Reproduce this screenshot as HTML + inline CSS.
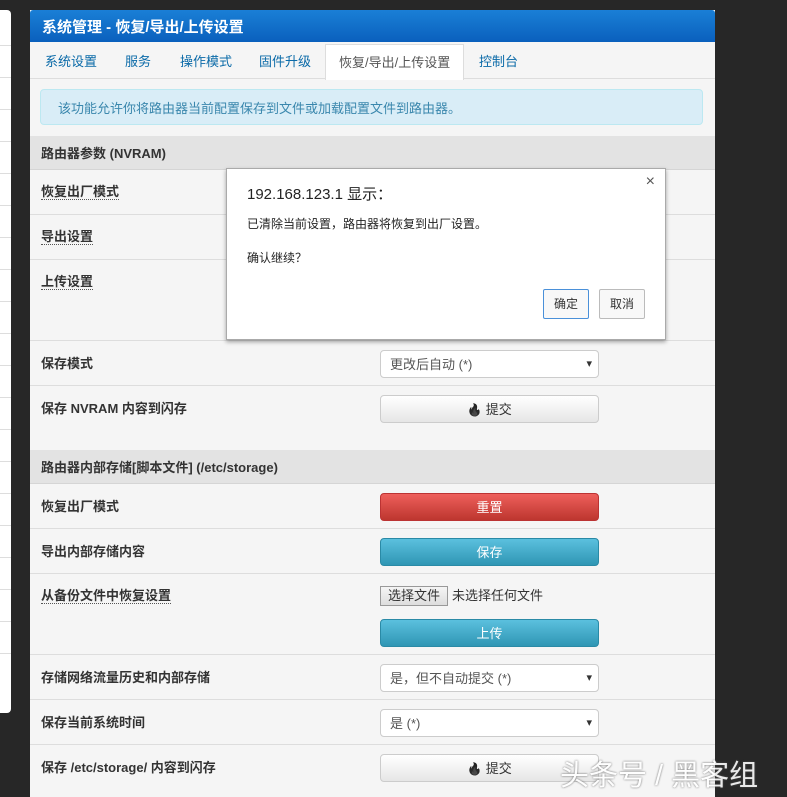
<!DOCTYPE html>
<html><head><meta charset="utf-8"><style>
*{box-sizing:border-box;margin:0;padding:0}
body{width:787px;height:797px;background:#272727;font-family:"Liberation Sans","Noto Sans CJK SC",sans-serif;font-size:13px;color:#333;position:relative;overflow:hidden}
.abs{position:absolute}
.side{left:0;top:10px;width:11px;height:703px;background:#fff;border-radius:0 4px 4px 0}
.side i{position:absolute;left:0;width:11px;border-top:1px solid #ddd}
.panel{left:30px;top:10px;width:685px;height:787px;background:#f5f5f5}
.hdr{left:0;top:0;width:685px;height:32px;background:linear-gradient(#1a7fd6,#0a60bd);color:#fff;font-weight:bold;font-size:15px;padding:6px 12px;border-radius:3px 3px 0 0}
.tabs{left:0;top:32px;width:685px;height:37px;border-bottom:1px solid #ddd;background:#f5f5f5}
.tab{position:absolute;top:9px;color:#0a6aa8;font-size:13px}
.tab.act{top:2px;background:#fff;border:1px solid #ddd;border-bottom:none;height:36px;padding:7px 13px;color:#555}
.info{left:10px;top:79px;width:663px;height:36px;background:#d9edf7;border:1px solid #bce8f1;border-radius:4px;color:#3a87ad;padding:8px 17px;font-size:13px}
.sec{left:0;width:685px;height:34px;background:#e3e3e3;font-weight:bold;padding:7px 11px;font-size:13px;border-bottom:1px solid #d5d5d5}
.row{left:0;width:685px;border-bottom:1px solid #ddd}
.lbl{position:absolute;left:11px;top:12px;font-weight:bold;font-size:13px}
.lbl.u{border-bottom:1px dotted #555;line-height:15px;top:14px}
.ctl{position:absolute;left:350px;width:219px;height:28px;border-radius:4px;text-align:center;line-height:27px;font-size:13px}
.sel{background:#fff;border:1px solid #ccc;text-align:left;padding-left:9px;color:#555}
.sel:after{content:"▾";position:absolute;right:6px;top:0;font-size:11px;color:#333}
.btn{background:linear-gradient(#fff,#e6e6e6);border:1px solid #ccc;color:#333}
.fl{filter:grayscale(1) brightness(.3);font-size:12px}
.red{background:linear-gradient(#ee5f5b,#bd362f);color:#fff;border:1px solid #b33}
.blue{background:linear-gradient(#5bc0de,#2f96b4);color:#fff;border:1px solid #2a8aa6}
.dlg{left:226px;top:168px;width:440px;height:172px;background:#fff;border:1px solid #aaa;box-shadow:0 2px 4px rgba(0,0,0,.35)}
.wm{left:560px;top:752px;font-size:29px;color:#fff;opacity:.9;text-shadow:0 0 2px #555}
</style></head><body>
<div class="abs side"><i style="top:35px"></i><i style="top:67px"></i><i style="top:99px"></i><i style="top:131px"></i><i style="top:163px"></i><i style="top:195px"></i><i style="top:227px"></i><i style="top:259px"></i><i style="top:291px"></i><i style="top:323px"></i><i style="top:355px"></i><i style="top:387px"></i><i style="top:419px"></i><i style="top:451px"></i><i style="top:483px"></i><i style="top:515px"></i><i style="top:547px"></i><i style="top:579px"></i><i style="top:611px"></i><i style="top:643px"></i></div>
<div class="abs panel">
<div class="abs hdr">系统管理 - 恢复/导出/上传设置</div>
<div class="abs tabs">
<span class="tab" style="left:15px">系统设置</span>
<span class="tab" style="left:95px">服务</span>
<span class="tab" style="left:150px">操作模式</span>
<span class="tab" style="left:229px">固件升级</span>
<span class="tab act" style="left:295px">恢复/导出/上传设置</span>
<span class="tab" style="left:449px">控制台</span>
</div>
<div class="abs info">该功能允许你将路由器当前配置保存到文件或加载配置文件到路由器。</div>
<div class="abs sec" style="top:126px">路由器参数 (NVRAM)</div>
<div class="abs row" style="top:160px;height:45px"><span class="lbl u">恢复出厂模式</span></div>
<div class="abs row" style="top:205px;height:45px"><span class="lbl u">导出设置</span></div>
<div class="abs row" style="top:250px;height:81px"><span class="lbl u">上传设置</span></div>
<div class="abs row" style="top:331px;height:45px"><span class="lbl">保存模式</span><div class="ctl sel" style="top:9px">更改后自动 (*)</div></div>
<div class="abs row" style="top:376px;height:64px;border:none"><span class="lbl">保存 NVRAM 内容到闪存</span><div class="ctl btn" style="top:9px"><span class="fl">🔥</span> 提交</div></div>
<div class="abs sec" style="top:440px">路由器内部存储[脚本文件] (/etc/storage)</div>
<div class="abs row" style="top:474px;height:45px"><span class="lbl">恢复出厂模式</span><div class="ctl red" style="top:9px">重置</div></div>
<div class="abs row" style="top:519px;height:45px"><span class="lbl">导出内部存储内容</span><div class="ctl blue" style="top:9px">保存</div></div>
<div class="abs row" style="top:564px;height:81px"><span class="lbl u">从备份文件中恢复设置</span>
<div class="abs" style="left:350px;top:12px;width:68px;height:20px;border:1px solid #999;background:linear-gradient(#f5f5f5,#ddd);font-size:13px;text-align:center;line-height:18px">选择文件</div>
<span class="abs" style="left:422px;top:11px;font-size:13px">未选择任何文件</span>
<div class="ctl blue" style="top:45px">上传</div></div>
<div class="abs row" style="top:645px;height:45px"><span class="lbl">存储网络流量历史和内部存储</span><div class="ctl sel" style="top:9px">是，但不自动提交 (*)</div></div>
<div class="abs row" style="top:690px;height:45px"><span class="lbl">保存当前系统时间</span><div class="ctl sel" style="top:9px">是 (*)</div></div>
<div class="abs row" style="top:735px;height:52px;border:none"><span class="lbl">保存 /etc/storage/ 内容到闪存</span><div class="ctl btn" style="top:9px"><span class="fl">🔥</span> 提交</div></div>
</div>
<div class="abs dlg">
<div class="abs" style="left:20px;top:14px;font-size:15px;color:#222">192.168.123.1 显示：</div>
<div class="abs" style="right:10px;top:4px;font-size:16px;color:#555">×</div>
<div class="abs" style="left:20px;top:46px;font-size:12px;color:#222">已清除当前设置，路由器将恢复到出厂设置。</div>
<div class="abs" style="left:20px;top:80px;font-size:12px;color:#222">确认继续？</div>
<div class="abs" style="left:316px;top:120px;width:46px;height:30px;border:1px solid #4a90d9;border-radius:2px;background:#f8f8f8;font-size:12px;text-align:center;line-height:28px">确定</div>
<div class="abs" style="left:372px;top:120px;width:46px;height:30px;border:1px solid #bbb;border-radius:2px;background:#f8f8f8;font-size:12px;text-align:center;line-height:28px">取消</div>
</div>
<div class="abs wm">头条号 / 黑客组</div>
</body></html>
